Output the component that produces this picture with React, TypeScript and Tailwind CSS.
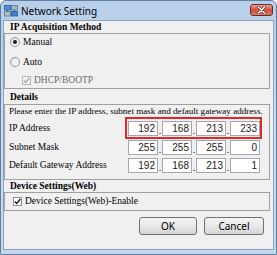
import React from 'react';

const serif = { fontFamily: '"Liberation Serif", "Times New Roman", serif' };

const Radio: React.FC<{ checked?: boolean }> = ({ checked }) => (
  <span className="w-[10px] h-[10px] rounded-full border border-[#979797] bg-gradient-to-br from-[#e2e2e2] to-[#ffffff] flex items-center justify-center shrink-0">
    {checked && <span className="w-[4px] h-[4px] rounded-full bg-[#1a1a1a]" />}
  </span>
);

const Check: React.FC<{ disabled?: boolean }> = ({ disabled }) => (
  <span
    className={
      'w-[9px] h-[9px] border flex items-center justify-center shrink-0 ' +
      (disabled ? 'border-[#b8b8b8] bg-[#f4f4f4]' : 'border-[#8e8f8f] bg-white')
    }
  >
    <svg width="7" height="7" viewBox="0 0 7 7">
      <path d="M0.8 3.4 L2.7 5.4 L6.3 1.0" fill="none" stroke={disabled ? '#a8a8a8' : '#1c1c1c'} strokeWidth="1.4" />
    </svg>
  </span>
);

const IpFields: React.FC<{ values: string[]; marked?: boolean }> = ({ values, marked }) => (
  <div
    className={
      'flex items-center pl-[1px] h-full border-2 ' + (marked ? 'border-[#e4262b]' : 'border-transparent')
    }
  >
    {values.map((v, i) => (
      <React.Fragment key={i}>
        {i > 0 && (
          <span className="w-[4px] h-[15px] flex items-end justify-center text-[10px] leading-[11px] text-black">.</span>
        )}
        <span
          className="w-[30px] h-[15px] bg-white border border-[#a4a8ae] text-right pr-[2px] text-[10px] leading-[13px] text-[#1a1a1a]"
          style={{ fontFamily: '"Liberation Sans", Arial, sans-serif' }}
        >
          {v}
        </span>
      </React.Fragment>
    ))}
  </div>
);

const Header: React.FC<{ title: string; h: string }> = ({ title, h }) => (
  <div className={'flex items-end pl-[6px] font-bold text-[9.5px] leading-[12px] text-black ' + h} style={serif}>
    {title}
  </div>
);

export default function App() {
  return (
    <div className="w-[277px] h-[255px] bg-white">
      <div className="w-[277px] h-[255px] rounded-t-[6px] border border-[#5f7fa3] bg-gradient-to-b from-[#b7cfea] via-[#c9dcf1] to-[#c2d6ed] flex flex-col">
        {/* title bar */}
        <div className="h-[19px] flex items-center pl-[3px] pr-[3px]">
          <svg width="14" height="12" viewBox="0 0 14 12" className="shrink-0">
            <rect x="0.5" y="0.5" width="6" height="4.5" fill="#4f8fd8" stroke="#2b5c9c" strokeWidth="0.8" />
            <rect x="7.5" y="0.5" width="6" height="4.5" fill="#9fb4c8" stroke="#61778e" strokeWidth="0.8" />
            <rect x="0.5" y="6.5" width="6" height="4.5" fill="#a7bacd" stroke="#61778e" strokeWidth="0.8" />
            <rect x="7.5" y="6.5" width="6" height="4.5" fill="#3f7fcf" stroke="#2b5c9c" strokeWidth="0.8" />
            <path d="M3.5 5 V6.5 M10.5 5 V6.5" stroke="#3a4a5a" strokeWidth="0.8" />
          </svg>
          <span
            className="ml-[3px] text-[10px] text-black leading-none"
            style={{ fontFamily: '"Noto Sans", "Segoe UI", sans-serif' }}
          >
            Network Setting
          </span>
          <div className="flex-1" />
          <div className="self-start mt-[3px] w-[23px] h-[12px] rounded-[3px] border border-[#6e2a24] bg-gradient-to-b from-[#e7a392] via-[#cc4d3f] to-[#d77a69] flex items-center justify-center">
            <svg width="9" height="8" viewBox="0 0 9 8">
              <path d="M1.5 1 L7.5 7 M7.5 1 L1.5 7" stroke="#5b2a24" strokeWidth="2.6" strokeLinecap="round" />
              <path d="M1.5 1 L7.5 7 M7.5 1 L1.5 7" stroke="#ffffff" strokeWidth="1.5" strokeLinecap="round" />
            </svg>
          </div>
        </div>

        {/* client area */}
        <div className="mx-[2px] mb-[4px] flex-1 bg-[#f0f0f0] border border-[#8ea2ba] flex flex-col text-black" style={serif}>
          <Header title="IP Acquisition Method" h="h-[12px]" />
          <div className="mr-[3px] h-[56px] border border-[#a0a0a0] flex flex-col pl-[5px] pt-[1px] text-[9.5px]">
            <div className="h-[14px] flex items-center gap-[3px]">
              <Radio checked />
              <span>Manual</span>
            </div>
            <div className="h-[14px] mt-[6px] flex items-center gap-[3px]">
              <Radio />
              <span>Auto</span>
            </div>
            <div className="h-[14px] mt-[4px] pl-[12px] flex items-center gap-[3px]">
              <Check disabled />
              <span className="text-[#6d6d6d]">DHCP/BOOTP</span>
            </div>
          </div>

          <Header title="Details" h="h-[15px] pb-[1px]" />
          <div className="mr-[3px] h-[76px] border border-[#a0a0a0] flex flex-col text-[9.5px]">
            <div className="h-[13px] pl-[4px] flex items-center whitespace-nowrap text-[9.1px]">
              Please enter the IP address, subnet mask and default gateway address.
            </div>
            <div className="h-[22px] -mt-[1px] flex items-center pr-[7px]">
              <span className="flex-1 pl-[4px]">IP Address</span>
              <IpFields values={['192', '168', '213', '233']} marked />
            </div>
            <div className="h-[19px] -mt-[1px] flex items-center pr-[7px]">
              <span className="flex-1 pl-[4px]">Subnet Mask</span>
              <IpFields values={['255', '255', '255', '0']} />
            </div>
            <div className="h-[19px] -mt-[1px] flex items-center pr-[7px]">
              <span className="flex-1 pl-[4px]">Default Gateway Address</span>
              <IpFields values={['192', '168', '213', '1']} />
            </div>
          </div>

          <Header title="Device Settings(Web)" h="h-[12px]" />
          <div className="mr-[3px] h-[19px] border border-[#a0a0a0] flex items-center pl-[8px] gap-[3px] text-[9.5px]">
            <Check />
            <span>Device Settings(Web)-Enable</span>
          </div>

          <div className="mt-[6px] flex justify-end gap-[7px] pr-[9px]" style={{ fontFamily: '"Noto Sans", "Segoe UI", sans-serif' }}>
            <button className="w-[58px] h-[18px] rounded-[3px] border border-[#707070] bg-gradient-to-b from-[#f4f4f4] via-[#e8e8e8] to-[#d4d4d4] text-[10px] text-black leading-none">
              OK
            </button>
            <button className="w-[60px] h-[18px] rounded-[3px] border border-[#707070] bg-gradient-to-b from-[#f4f4f4] via-[#e8e8e8] to-[#d4d4d4] text-[10px] text-black leading-none">
              Cancel
            </button>
          </div>
        </div>
      </div>
    </div>
  );
}
